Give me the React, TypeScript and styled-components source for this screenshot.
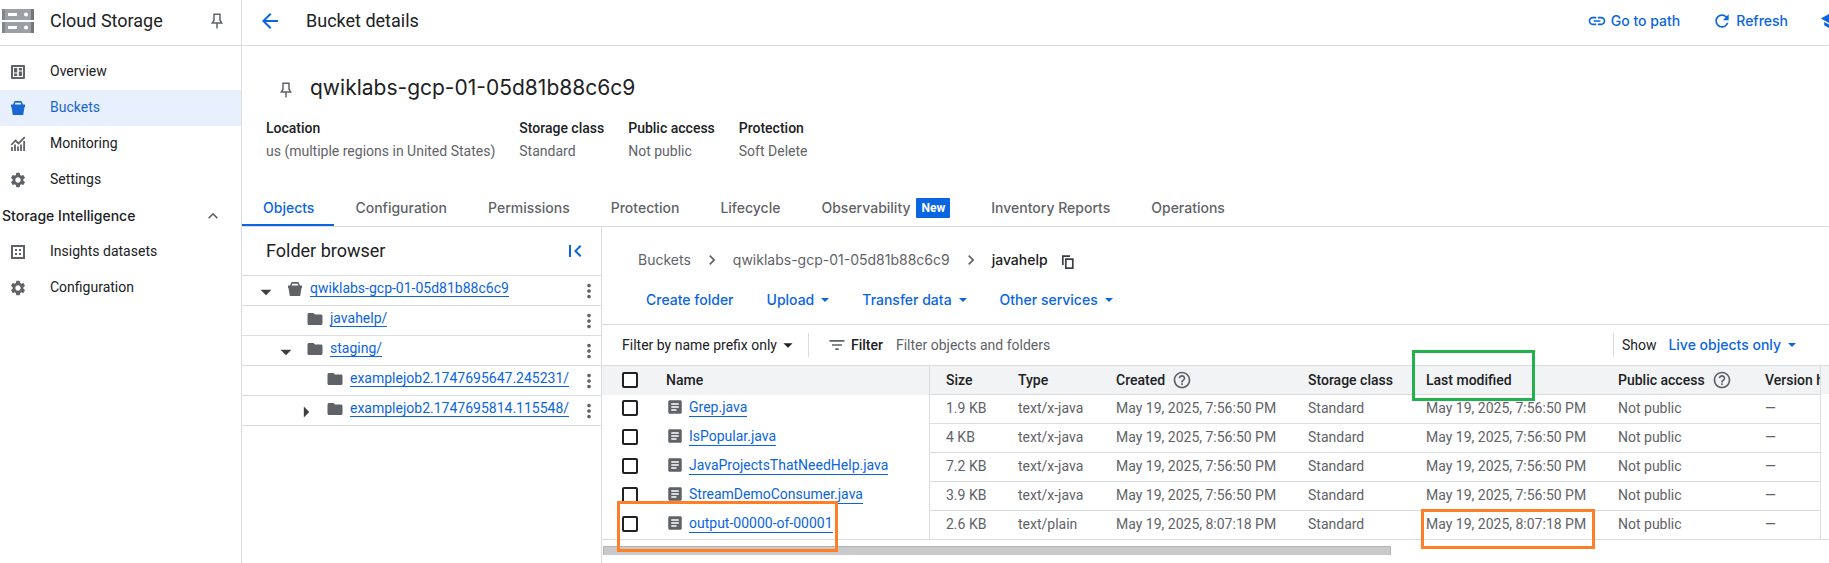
import React from 'react';
import styled, { createGlobalStyle, css } from 'styled-components';
import {
  MdArrowBack,
  MdArrowDropDown,
  MdArrowRight,
  MdArticle,
  MdChevronRight,
  MdExpandLess,
  MdFilterList,
  MdFirstPage,
  MdFolder,
  MdHelpOutline,
  MdLink,
  MdMoreVert,
  MdRefresh,
  MdSchool,
  MdSettings,
} from 'react-icons/md';

const color = {
  text: '#202124',
  muted: '#5f6368',
  blue: '#0b65e0',
  navBlue: '#1967d2',
  line: '#dadce0',
  headerBg: '#f1f3f4',
  selected: '#e8f0fe',
};

const body = `Roboto, "Liberation Sans", sans-serif`;
const display = `Inter, Roboto, sans-serif`;

const GlobalStyle = createGlobalStyle`
  * { box-sizing: border-box; }
  body {
    margin: 0;
    background: #fff;
    color: ${color.text};
    font: 14px/20px ${body};
    overflow: hidden;
  }
  h1, h2, p, ul, dl, dd { margin: 0; padding: 0; }
  button, input, select { font: inherit; color: inherit; }
  svg { display: block; flex: none; }
`;

/* ---------- shell ---------- */

const Shell = styled.div`
  display: grid;
  grid-template-columns: 242px minmax(0, 1fr);
  min-height: 100vh;
`;

const Sidebar = styled.aside`
  border-right: 1px solid ${color.line};
`;

const TopBar = styled.header`
  display: flex;
  align-items: center;
  height: 46px;
  padding-bottom: 3px;
  border-bottom: 1px solid ${color.line};
`;

const ProductBar = styled(TopBar)`
  padding-left: 2px;
  padding-right: 18px;
`;

const BarTitle = styled.h2`
  font: 400 18px/24px ${body};
`;

const ProductTitle = styled(BarTitle)`
  flex: 1;
  margin-left: 16px;
`;

const IconButton = styled.button<{ $tone?: string }>`
  display: flex;
  padding: 0;
  border: 0;
  background: none;
  color: ${(p) => p.$tone ?? color.muted};
  cursor: pointer;
`;

const NavList = styled.ul`
  list-style: none;
  padding-top: 8px;
`;

const NavGroup = styled(NavList)`
  padding-top: 0;
`;

const NavLink = styled.a<{ $active?: boolean }>`
  display: flex;
  align-items: center;
  gap: 23px;
  height: 36px;
  padding-left: 9px;
  color: ${(p) => (p.$active ? color.navBlue : color.text)};
  background: ${(p) => (p.$active ? color.selected : 'transparent')};
  text-decoration: none;
  svg {
    color: ${(p) => (p.$active ? color.navBlue : color.muted)};
  }
`;

const NavText = styled.span`
  padding-bottom: 2px;
`;

const GroupToggle = styled.button`
  display: flex;
  align-items: center;
  justify-content: space-between;
  width: 100%;
  height: 36px;
  padding: 0 18px 0 2px;
  border: 0;
  background: none;
  font: 500 14px/20px ${display};
  cursor: pointer;
  svg {
    color: ${color.muted};
  }
`;

/* ---------- page header ---------- */

const PageBar = styled(TopBar)`
  padding-left: 16px;
`;

const PageTitle = styled(BarTitle)`
  flex: 1;
  margin-left: 24px;
`;

const BarActions = styled.div`
  display: flex;
  gap: 32px;
  margin-right: -11px;
`;

const TextButton = styled.button<{ $menu?: boolean }>`
  display: flex;
  align-items: center;
  gap: ${(p) => (p.$menu ? 7 : 4)}px;
  padding: 0;
  border: 0;
  background: none;
  color: ${color.blue};
  font: 500 14px/20px ${display};
  white-space: nowrap;
  cursor: pointer;
`;

const Summary = styled.section`
  padding: 26px 24px 28px;
`;

const BucketHeading = styled.div`
  display: flex;
  align-items: center;
  gap: 18px;
  padding-left: 14px;
`;

const BucketName = styled.h1`
  font: 400 21px/32px ${display};
`;

const BucketPin = styled(IconButton)`
  padding-top: 4px;
`;

const Facts = styled.dl`
  display: flex;
  gap: 24px;
  margin-top: 14px;
  dt {
    font-weight: 500;
  }
  dd {
    margin-top: 3px;
    color: ${color.muted};
  }
`;

const Tabs = styled.nav`
  display: flex;
  border-bottom: 1px solid ${color.line};
`;

const Tab = styled.a<{ $active?: boolean }>`
  display: flex;
  align-items: center;
  gap: 6px;
  height: 37px;
  padding: 0 20px 0 21px;
  color: ${(p) => (p.$active ? color.blue : color.muted)};
  font: 500 14px/20px ${display};
  text-decoration: none;
  white-space: nowrap;
  box-shadow: ${(p) => (p.$active ? `inset 0 -2px ${color.blue}` : 'none')};
`;

const NewBadge = styled.span`
  padding: 0 5px;
  border-radius: 1px;
  background: ${color.blue};
  color: #fff;
  font: 700 12px/20px ${body};
`;

/* ---------- folder browser ---------- */

const Workspace = styled.div`
  display: grid;
  grid-template-columns: 360px minmax(0, 1fr);
  min-height: 336px;
`;

const FolderPane = styled.section`
  border-right: 1px solid ${color.line};
`;

const FolderHeader = styled.div`
  display: flex;
  align-items: center;
  justify-content: space-between;
  height: 49px;
  padding: 0 14px 0 24px;
  border-bottom: 1px solid ${color.line};
`;

const TreeRow = styled.li<{ $level: number }>`
  display: flex;
  align-items: center;
  height: 30px;
  padding: 0 1px 0 ${(p) => 11 + p.$level * 20}px;
  border-bottom: 1px solid ${color.line};
  list-style: none;
`;

const Expander = styled.span`
  display: flex;
  width: 26px;
  height: 26px;
  margin: 2px 7px 0 0;
  color: #3c4043;
`;

const TreeIcon = styled.span`
  display: flex;
  width: 24px;
  padding-bottom: 3px;
  color: ${color.muted};
`;

const ObjectLink = styled.a`
  color: ${color.blue};
  border-bottom: 1px solid ${color.blue};
  line-height: 18px;
  text-decoration: none;
`;

const TreeLabel = styled.span`
  flex: 1;
  padding-bottom: 6px;
  line-height: 18px;
`;

/* ---------- objects pane ---------- */

const ObjectsPane = styled.section`
  position: relative;
`;

const Breadcrumb = styled.nav`
  display: flex;
  align-items: center;
  height: 65px;
  padding-left: 36px;
  color: ${color.muted};
  font: 500 14px/20px ${display};
  a {
    color: inherit;
    font-weight: 400;
    text-decoration: none;
  }
  strong {
    color: ${color.text};
    font-weight: 500;
    margin-right: 13px;
  }
  > svg {
    margin: 0 11px;
  }
`;

const CopyButton = styled(IconButton)`
  padding-top: 5px;
`;

const Toolbar = styled.div`
  display: flex;
  gap: 33px;
  height: 32px;
  padding: 0 44px 16px;
`;

const FilterBar = styled.form`
  display: flex;
  align-items: center;
  height: 41px;
  border-top: 1px solid ${color.line};
`;

const PrefixButton = styled.button`
  display: flex;
  align-items: center;
  height: 24px;
  padding: 0 9px 0 20px;
  border: 0;
  border-right: 1px solid ${color.line};
  background: none;
`;

const FilterLabel = styled.label`
  display: flex;
  align-items: center;
  gap: 4px;
  margin-left: 18px;
  font-weight: 500;
  svg {
    color: ${color.muted};
  }
`;

const FilterInput = styled.input`
  flex: 1;
  margin-left: 13px;
  padding: 0;
  border: 0;
  outline: 0;
  &::placeholder {
    color: ${color.muted};
    opacity: 1;
  }
`;

const ShowControl = styled.div`
  display: flex;
  align-items: center;
  gap: 12px;
  height: 24px;
  padding: 0 33px 0 8px;
  border-left: 1px solid ${color.line};
`;

const TableFrame = styled.div`
  display: grid;
  grid-template-columns: minmax(0, 1fr) 8px;
  border-top: 1px solid ${color.line};
  border-bottom: 1px solid ${color.line};
`;

const TableClip = styled.div`
  overflow: hidden;
  border-right: 1px solid ${color.line};
`;

const Gutter = styled.div`
  height: 28px;
  background: ${color.headerBg};
`;

const Table = styled.table`
  width: 1297px;
  table-layout: fixed;
  border-collapse: separate;
  border-spacing: 0;
`;

const Col = styled.col<{ $w: number }>`
  width: ${(p) => p.$w}px;
`;

const cell = css`
  height: 29px;
  padding: 0 0 0 16px;
  text-align: left;
  white-space: nowrap;
  border-bottom: 1px solid ${color.line};
`;

const Th = styled.th<{ $pinned?: boolean; $edge?: boolean }>`
  ${cell}
  background: ${color.headerBg};
  font: 500 14px/20px ${body};
  ${(p) => p.$pinned && `border-bottom-color: transparent;`}
  ${(p) => p.$edge && `border-left: 1px solid ${color.line};`}
`;

const Td = styled.td<{ $pinned?: boolean; $edge?: boolean }>`
  ${cell}
  padding-bottom: 2px;
  color: ${color.muted};
  ${(p) => p.$pinned && `border-bottom-color: transparent;`}
  ${(p) => p.$edge && `border-left: 1px solid ${color.line};`}
  tr:last-child & {
    height: 28px;
    border-bottom: 0;
  }
`;

const CheckTd = styled(Td)`
  padding-left: 20px;
`;
const CheckTh = styled(Th)`
  padding-left: 20px;
`;

const HeadLabel = styled.span`
  display: flex;
  align-items: center;
  gap: 7px;
  svg {
    color: ${color.muted};
  }
`;

const NameCell = styled.span`
  display: flex;
  align-items: center;
  gap: 5px;
  padding-bottom: 2px;
  svg {
    color: ${color.muted};
  }
`;

const Checkbox = styled.input`
  appearance: none;
  display: block;
  width: 16px;
  height: 16px;
  margin: 0;
  border: 2px solid ${color.text};
  border-radius: 2px;
  background: #fff;
`;

const ScrollThumb = styled.div`
  width: 64.2%;
  height: 9px;
  margin: 6px 0 0 1px;
  border: 1px solid #b4b4b4;
  border-bottom: 0;
  background: #c9c9c9;
`;

/* Highlight boxes drawn over the table. */
const Highlight = styled.div<{ $x: number; $y: number; $w: number; $h: number; $c: string }>`
  position: absolute;
  left: ${(p) => p.$x}px;
  top: ${(p) => p.$y}px;
  width: ${(p) => p.$w}px;
  height: ${(p) => p.$h}px;
  border: 3px solid ${(p) => p.$c};
  pointer-events: none;
`;

/* ---------- icons ---------- */

const StorageLogo = () => (
  <svg width="32" height="24" viewBox="0 0 32 24" aria-hidden="true">
    {[0, 13].map((y) => (
      <g key={y}>
        <path fill="#9aa0a6" d={`M0 ${y}h32v11H0z`} />
        <path fill="#80868b" d={`M0 ${y}h3v11H0z`} />
        <path fill="#757575" d={`M29 ${y}h3v11h-3z`} />
        <path fill="#fff" d={`M6 ${y + 4}h9v3H6z`} />
        <circle fill="#fff" cx="24" cy={y + 5.5} r="2" />
      </g>
    ))}
  </svg>
);

const PinIcon = () => (
  <svg width="12" height="16" viewBox="0 0 12 16" fill="none" stroke="currentColor" strokeWidth="1.5" aria-hidden="true">
    <path d="M3 1.250h6v6l1.700 2.750H1.300L3 7.250z" />
    <path d="M6 10v5.500" />
  </svg>
);

const OverviewIcon = () => (
  <svg width="18" height="18" viewBox="0 0 18 18" aria-hidden="true">
    <path
      fill="currentColor"
      fillRule="evenodd"
      d="M3 2h12a1 1 0 0 1 1 1v12a1 1 0 0 1-1 1H3a1 1 0 0 1-1-1V3a1 1 0 0 1 1-1zM4 4v10h10V4z"
    />
    <path fill="currentColor" d="M5 5h3.200v4.500H5zM5 10.500h3.200V13H5zM9.800 5H13v2.500H9.800zM9.800 8.500H13V13H9.800z" />
  </svg>
);

const BucketIcon = () => (
  <svg width="18" height="18" viewBox="0 0 18 18" fill="currentColor" aria-hidden="true">
    <path
      fillRule="evenodd"
      d="M5.6 2h6.800L14 5.500h2V8h-.5l-1.300 8H3.800L2.500 8H2V5.500h2zM6.300 3.700 5.700 5.500h6.600l-.6-1.800z"
    />
  </svg>
);

const MonitoringIcon = () => (
  <svg width="18" height="18" viewBox="0 0 18 18" fill="none" stroke="currentColor" aria-hidden="true">
    <path strokeWidth="1.800" d="M2.200 10 6.500 5.500l3 3L15.800 2.200" />
    <path strokeWidth="1.800" d="M3 12v4M6 9.500V16M9 11.500V16M12 9.500V16M15.100 6v10" />
  </svg>
);

const DatasetIcon = () => (
  <svg width="18" height="18" viewBox="0 0 18 18" fill="currentColor" aria-hidden="true">
    <path fillRule="evenodd" d="M2 2h14v14H2zM4 4v10h10V4z" />
    <path d="M6 6h2v2H6zM10 6h2v2h-2zM6 10h2v2H6zM10 10h2v2h-2z" />
  </svg>
);

const CopyIcon = () => (
  <svg width="14" height="14" viewBox="0 0 14 14" fill="none" stroke="#3c4043" strokeWidth="1.700" aria-hidden="true">
    <path d="M1.800 10V1.200H9" />
    <path d="M4.800 4.200h7v9h-7z" />
  </svg>
);

const Caret = () => (
  <svg width="8" height="4" viewBox="0 0 8 4" fill="currentColor" aria-hidden="true">
    <path d="M0 0h8L4 4z" />
  </svg>
);

/* ---------- data ---------- */

const nav = [
  { label: 'Overview', icon: <OverviewIcon /> },
  { label: 'Buckets', icon: <BucketIcon />, active: true },
  { label: 'Monitoring', icon: <MonitoringIcon /> },
  { label: 'Settings', icon: <MdSettings size={18} /> },
];

const intelligence = [
  { label: 'Insights datasets', icon: <DatasetIcon /> },
  { label: 'Configuration', icon: <MdSettings size={18} /> },
];

const facts = [
  ['Location', 'us (multiple regions in United States)'],
  ['Storage class', 'Standard'],
  ['Public access', 'Not public'],
  ['Protection', 'Soft Delete'],
];

const tabs = [
  'Objects',
  'Configuration',
  'Permissions',
  'Protection',
  'Lifecycle',
  'Observability',
  'Inventory Reports',
  'Operations',
];

type Node = { name: string; level: number; state?: 'open' | 'closed'; bucket?: boolean };

const tree: Node[] = [
  { name: 'qwiklabs-gcp-01-05d81b88c6c9', level: 0, state: 'open', bucket: true },
  { name: 'javahelp/', level: 1 },
  { name: 'staging/', level: 1, state: 'open' },
  { name: 'examplejob2.1747695647.245231/', level: 2 },
  { name: 'examplejob2.1747695814.115548/', level: 2, state: 'closed' },
];

const files = [
  ['Grep.java', '1.9 KB', 'text/x-java', 'May 19, 2025, 7:56:50 PM'],
  ['IsPopular.java', '4 KB', 'text/x-java', 'May 19, 2025, 7:56:50 PM'],
  ['JavaProjectsThatNeedHelp.java', '7.2 KB', 'text/x-java', 'May 19, 2025, 7:56:50 PM'],
  ['StreamDemoConsumer.java', '3.9 KB', 'text/x-java', 'May 19, 2025, 7:56:50 PM'],
  ['output-00000-of-00001', '2.6 KB', 'text/plain', 'May 19, 2025, 8:07:18 PM'],
];

const columnWidths = [48, 279, 73, 98, 192, 118, 192, 147, 150];

/* ---------- page ---------- */

export default function App() {
  return (
    <>
      <GlobalStyle />
      <Shell>
        <Sidebar>
          <ProductBar>
            <StorageLogo />
            <ProductTitle>Cloud Storage</ProductTitle>
            <IconButton aria-label="Pin product">
              <PinIcon />
            </IconButton>
          </ProductBar>
          <NavList>
            {nav.map((n) => (
              <li key={n.label}>
                <NavLink href="#" $active={n.active}>
                  {n.icon}
                  <NavText>{n.label}</NavText>
                </NavLink>
              </li>
            ))}
          </NavList>
          <GroupToggle aria-expanded="true">
            Storage Intelligence
            <MdExpandLess size={20} />
          </GroupToggle>
          <NavGroup>
            {intelligence.map((n) => (
              <li key={n.label}>
                <NavLink href="#">
                  {n.icon}
                  <NavText>{n.label}</NavText>
                </NavLink>
              </li>
            ))}
          </NavGroup>
        </Sidebar>

        <main>
          <PageBar>
            <IconButton aria-label="Back" $tone={color.blue}>
              <MdArrowBack size={24} />
            </IconButton>
            <PageTitle>Bucket details</PageTitle>
            <BarActions>
              <TextButton>
                <MdLink size={20} />
                Go to path
              </TextButton>
              <TextButton>
                <MdRefresh size={20} />
                Refresh
              </TextButton>
              <IconButton aria-label="Learn" $tone={color.blue}>
                <MdSchool size={20} />
              </IconButton>
            </BarActions>
          </PageBar>

          <Summary>
            <BucketHeading>
              <BucketPin aria-label="Pin bucket">
                <PinIcon />
              </BucketPin>
              <BucketName>qwiklabs-gcp-01-05d81b88c6c9</BucketName>
            </BucketHeading>
            <Facts>
              {facts.map(([k, v]) => (
                <div key={k}>
                  <dt>{k}</dt>
                  <dd>{v}</dd>
                </div>
              ))}
            </Facts>
          </Summary>

          <Tabs>
            {tabs.map((t, i) => (
              <Tab key={t} href="#" $active={i === 0}>
                {t}
                {t === 'Observability' && <NewBadge>New</NewBadge>}
              </Tab>
            ))}
          </Tabs>

          <Workspace>
            <FolderPane>
              <FolderHeader>
                <BarTitle>Folder browser</BarTitle>
                <IconButton aria-label="Collapse folder browser" $tone={color.blue}>
                  <MdFirstPage size={24} />
                </IconButton>
              </FolderHeader>
              <ul>
                {tree.map((n) => (
                  <TreeRow key={n.name} $level={n.level}>
                    <Expander>
                      {n.state === 'open' && <MdArrowDropDown size={26} />}
                      {n.state === 'closed' && <MdArrowRight size={26} />}
                    </Expander>
                    <TreeIcon>{n.bucket ? <BucketIcon /> : <MdFolder size={18} />}</TreeIcon>
                    <TreeLabel>
                      <ObjectLink href="#">{n.name}</ObjectLink>
                    </TreeLabel>
                    <IconButton aria-label={`Actions for ${n.name}`}>
                      <MdMoreVert size={22} />
                    </IconButton>
                  </TreeRow>
                ))}
              </ul>
            </FolderPane>

            <ObjectsPane>
              <Breadcrumb aria-label="Path">
                <a href="#">Buckets</a>
                <MdChevronRight size={20} />
                <a href="#">qwiklabs-gcp-01-05d81b88c6c9</a>
                <MdChevronRight size={20} />
                <strong>javahelp</strong>
                <CopyButton aria-label="Copy path">
                  <CopyIcon />
                </CopyButton>
              </Breadcrumb>
              <Toolbar>
                <TextButton>Create folder</TextButton>
                <TextButton $menu>
                  Upload <Caret />
                </TextButton>
                <TextButton $menu>
                  Transfer data <Caret />
                </TextButton>
                <TextButton $menu>
                  Other services <Caret />
                </TextButton>
              </Toolbar>
              <FilterBar>
                <PrefixButton type="button">
                  Filter by name prefix only
                  <MdArrowDropDown size={22} />
                </PrefixButton>
                <FilterLabel htmlFor="filter">
                  <MdFilterList size={20} />
                  Filter
                </FilterLabel>
                <FilterInput id="filter" placeholder="Filter objects and folders" />
                <ShowControl>
                  Show
                  <TextButton type="button" $menu>
                    Live objects only <Caret />
                  </TextButton>
                </ShowControl>
              </FilterBar>
              <TableFrame>
                <TableClip>
                  <Table>
                    <colgroup>
                      {columnWidths.map((w, i) => (
                        <Col key={i} $w={w} />
                      ))}
                    </colgroup>
                    <thead>
                      <tr>
                        <CheckTh $pinned>
                          <Checkbox type="checkbox" aria-label="Select all" />
                        </CheckTh>
                        <Th $pinned>Name</Th>
                        <Th $edge>Size</Th>
                        <Th>Type</Th>
                        <Th>
                          <HeadLabel>
                            Created <MdHelpOutline size={20} />
                          </HeadLabel>
                        </Th>
                        <Th>Storage class</Th>
                        <Th>Last modified</Th>
                        <Th>
                          <HeadLabel>
                            Public access <MdHelpOutline size={20} />
                          </HeadLabel>
                        </Th>
                        <Th>Version history</Th>
                      </tr>
                    </thead>
                    <tbody>
                      {files.map(([name, size, type, date]) => (
                        <tr key={name}>
                          <CheckTd $pinned>
                            <Checkbox type="checkbox" aria-label={`Select ${name}`} />
                          </CheckTd>
                          <Td $pinned>
                            <NameCell>
                              <MdArticle size={18} />
                              <ObjectLink href="#">{name}</ObjectLink>
                            </NameCell>
                          </Td>
                          <Td $edge>{size}</Td>
                          <Td>{type}</Td>
                          <Td>{date}</Td>
                          <Td>Standard</Td>
                          <Td>{date}</Td>
                          <Td>Not public</Td>
                          <Td>—</Td>
                        </tr>
                      ))}
                    </tbody>
                  </Table>
                </TableClip>
                <Gutter />
              </TableFrame>
              <ScrollThumb />
              <Highlight $x={810} $y={123} $w={123} $h={51} $c="#22b14c" />
              <Highlight $x={15} $y={274} $w={221} $h={51} $c="#ff7f27" />
              <Highlight $x={819} $y={282} $w={174} $h={40} $c="#ff7f27" />
            </ObjectsPane>
          </Workspace>
        </main>
      </Shell>
    </>
  );
}
